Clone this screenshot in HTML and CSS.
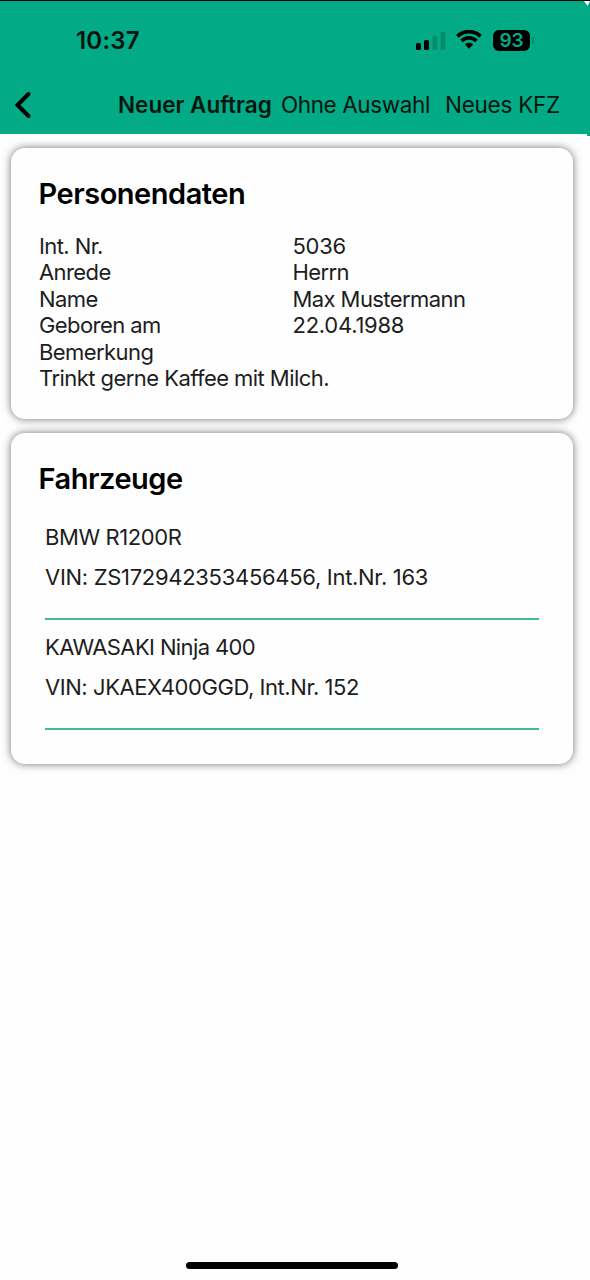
FILE: index.html
```html
<!DOCTYPE html>
<html lang="de">
<head>
<meta charset="utf-8">
<title>Personendaten</title>
<link rel="stylesheet" href="styles.css">
</head>
<body>
<div class="screen">
  <header class="header">
    <div class="status">
      <span class="time">10:37</span>
      <div class="status-icons">
        <svg class="signal" width="30" height="20" viewBox="0 0 30 20"><rect x="0" y="12" width="5" height="7" rx="1.5"/><rect x="8" y="9" width="5" height="10" rx="1.5"/><rect class="dim" x="16.5" y="5" width="5" height="14" rx="1.5"/><rect class="dim" x="24.5" y="1" width="5" height="18" rx="1.5"/></svg>
        <svg class="wifi" width="26" height="19" viewBox="0 0 26 19"><path d="M1.500 6.300C8 .1 18 .1 24.500 6.300M5.600 10.800c4.300-4 10.500-4 14.800 0"/><path class="wifi-dot" d="M8.800 14.300c2.400-2.100 6-2.100 8.400 0L13 18.700z"/></svg>
        <div class="battery"><span class="level">93</span><span class="cap"></span></div>
      </div>
    </div>
    <nav class="nav">
      <svg class="back" width="18" height="28" viewBox="0 0 18 28"><path d="M14.500 3L3.500 14l11 11"/></svg>
      <span class="action primary">Neuer Auftrag</span>
      <span class="action select">Ohne Auswahl</span>
      <span class="action vehicle">Neues KFZ</span>
    </nav>
  </header>
  <main class="content">
    <section class="card person">
      <h2 class="title">Personendaten</h2>
      <div class="fields">
        <span>Int. Nr.</span><span class="number">5036</span>
        <span>Anrede</span><span>Herrn</span>
        <span>Name</span><span>Max Mustermann</span>
        <span>Geboren am</span><span class="number">22.04.1988</span>
        <span>Bemerkung</span><span></span>
        <span class="note">Trinkt gerne Kaffee mit Milch.</span>
      </div>
    </section>
    <section class="card vehicles">
      <h2 class="title vehicles-title">Fahrzeuge</h2>
      <div class="rows">
        <div class="row"><span class="model">BMW R1200R</span><span class="vin">VIN: ZS172942353456456, Int.Nr. 163</span></div>
        <div class="row tight"><span class="model">KAWASAKI Ninja 400</span><span class="vin">VIN: JKAEX400GGD, Int.Nr. 152</span></div>
      </div>
    </section>
  </main>
  <div class="home"></div>
</div>
</body>
</html>
```
FILE: styles.css
```css
* { box-sizing: border-box; }
body { margin: 0; background: #fefefe; font-family: Inter, "Liberation Sans", sans-serif; }
.screen { width: 590px; height: 1280px; display: flex; flex-direction: column; overflow: hidden; }
.header { position: relative; height: 134px; flex: none; background: #02ab85; border-top: 1px solid #000; color: #04140f; }
.header::before { content: ""; position: absolute; top: 0; right: 0; width: 6px; height: 5px; background: #fefefe; clip-path: polygon(0 0, 100% 0, 60% 100%); }
.header::after { content: ""; position: absolute; bottom: -2px; right: 0; width: 3px; height: 2px; background: #02ab85; }
.status { height: 70px; padding: 9px 56px 0 76px; display: flex; justify-content: space-between; align-items: center; }
.time { font-size: 24px; font-weight: 600; line-height: 30px; letter-spacing: 0.2px; }
.status-icons { display: flex; align-items: center; }
.signal { margin-right: 10px; }
.signal .dim { fill: #028e6e; }
.wifi { fill: none; stroke: #000; stroke-width: 3.800; margin: 0 11px 2px 0; }
.wifi-dot { fill: #000; stroke: none; }
.battery { display: flex; align-items: center; gap: 2px; }
.level { width: 37px; height: 21px; border-radius: 6px; background: #000; color: #02ab85; font-size: 19px; font-weight: 600; line-height: 21px; text-align: center; }
.cap { width: 2px; height: 7px; border-radius: 0 2px 2px 0; background: #028e6e; }
.nav { height: 64px; display: flex; align-items: center; padding: 3px 30px 0 14px; white-space: nowrap; }
.back { fill: none; stroke: #000; stroke-width: 4; stroke-linecap: round; }
.action { font-size: 22.500px; line-height: 30px; }
.primary { font-weight: 600; width: 162px; margin-left: 86px; }
.select { width: 163px; margin-left: 1px; letter-spacing: -0.400px; }
.vehicle { letter-spacing: -0.250px; }
.action.vehicle { margin-left: 1px; }
.content { flex: 1; padding: 14px 17px 0 11px; display: flex; flex-direction: column; gap: 14px; }
.card { border-radius: 14px; background: #fefefe; box-shadow: 0 0 8px rgba(0,0,0,.55); }
.person { height: 271px; padding: 28px; }
.vehicles { height: 331px; padding: 28px 34px 0 28px; }
.title { margin: 0 0 0 -0.500px; font-size: 29px; line-height: 36px; font-weight: 600; letter-spacing: -0.480px; color: #000; }
.fields { margin-top: 20.500px; display: grid; grid-template-columns: 253.500px 1fr; grid-auto-rows: 26.600px; font-size: 22px; line-height: 26.600px; letter-spacing: -0.580px; color: #1d1d1d; }
.number { letter-spacing: -0.250px; }
.note { grid-column: 1 / 3; letter-spacing: -0.550px; }
.rows { padding: 13px 0 0 6px; }
.row { height: 110px; border-bottom: 2px solid #42b99c; padding-top: 12px; display: flex; flex-direction: column; gap: 10px; color: #1d1d1d; font-size: 22px; line-height: 30px; letter-spacing: -0.300px; }
.row .model { letter-spacing: -0.400px; }
.tight .model { letter-spacing: -0.620px; }
.tight .vin { letter-spacing: -0.430px; }
.home { width: 212px; height: 7px; border-radius: 4px; background: #000; margin: 0 auto 11px 186px; }
```
